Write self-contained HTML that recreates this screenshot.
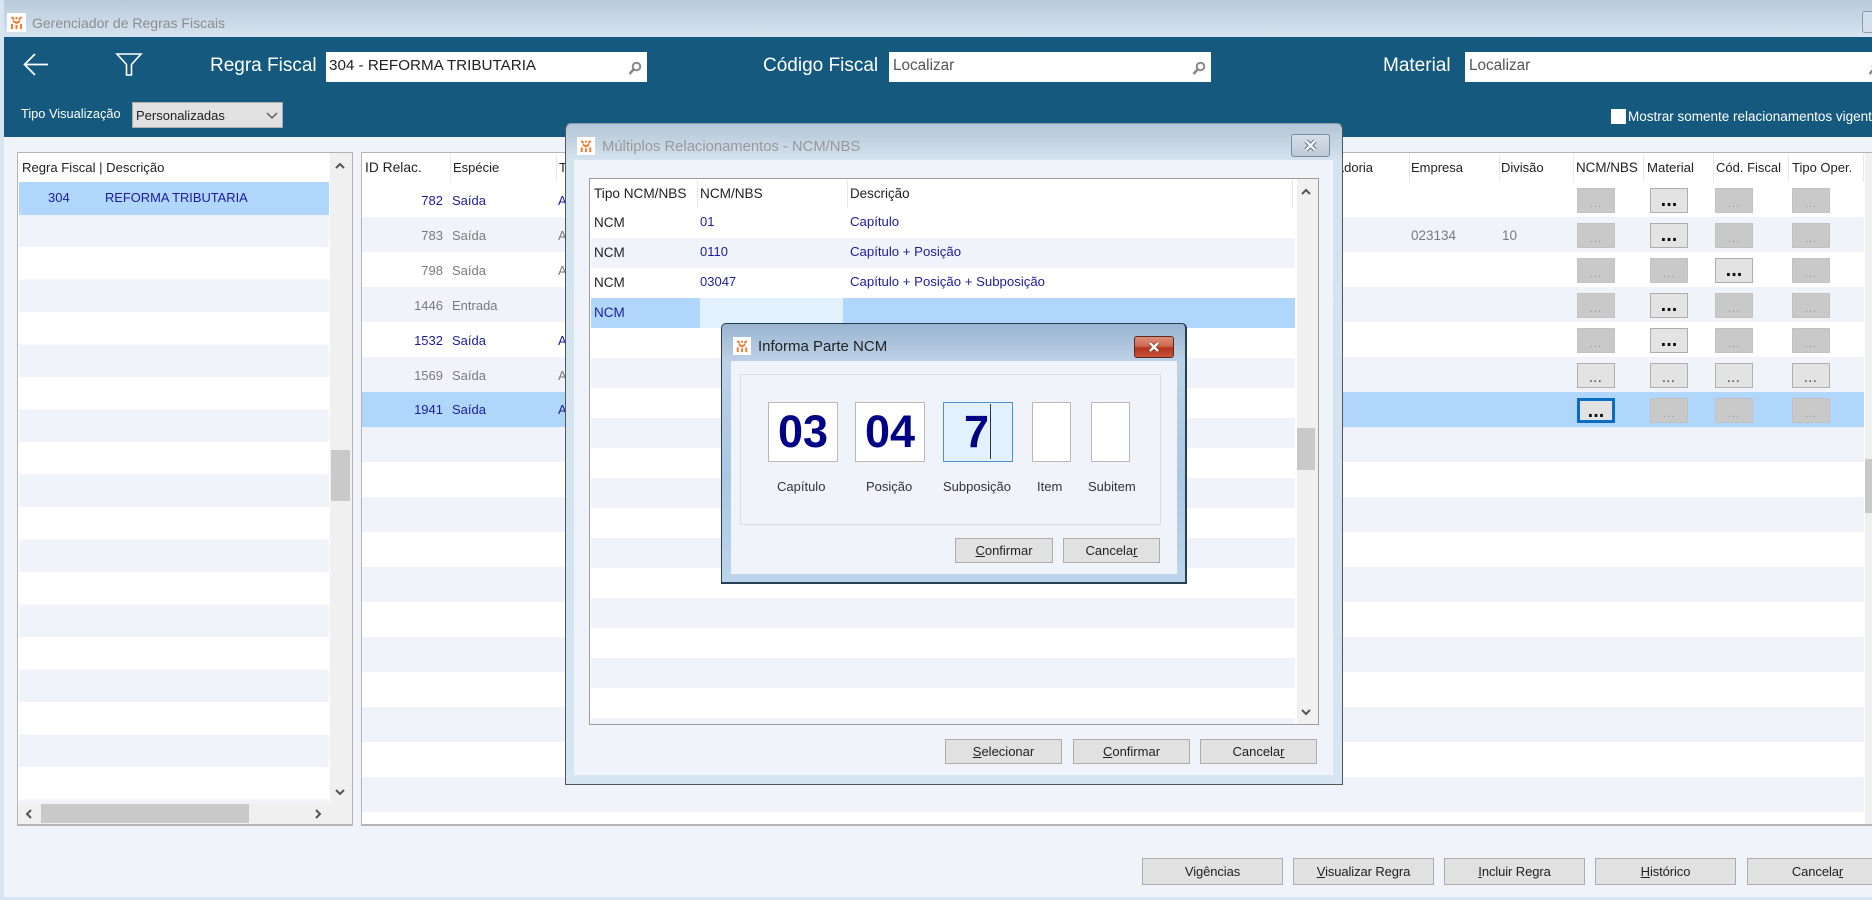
<!DOCTYPE html>
<html><head><meta charset="utf-8"><title>Gerenciador de Regras Fiscais</title>
<style>
html,body{margin:0;padding:0;width:1872px;height:900px;overflow:hidden;background:#f1f3fb;font-family:"Liberation Sans",sans-serif;font-size:13px;color:#222}
#w{position:absolute;left:0;top:0;width:1872px;height:900px;overflow:hidden;filter:blur(.35px)}
div,span{box-sizing:border-box}
.a{position:absolute}
.t{position:absolute;white-space:nowrap;line-height:16px;height:16px}
.bl{color:#1c1c9c}.gr{color:#7b7b7b}
.r{text-align:right}
.sep{position:absolute;width:1px;background:#e8e8e8}
.btn{position:absolute;background:#e1e1e1;border:1px solid #adadad;text-align:center;color:#222;font-size:13px;white-space:nowrap}
.b{position:absolute;width:38px;height:25px;text-align:center;white-space:nowrap;overflow:hidden}
.e{background:#e3e3e3;border:1px solid #adadad;font-weight:bold;font-size:20px;line-height:23px;color:#111}
.d{background:#c9c9c9;border:1px solid #c2c2c2;font-size:11px;line-height:31px;color:#999;letter-spacing:1px}
.l{background:#e3e3e3;border:1px solid #b0b0b0;font-size:11px;font-weight:bold;line-height:30px;color:#555;letter-spacing:1.4px}
.f{background:#e3e3e3;border:3px solid #0a6cc4;font-weight:bold;font-size:20px;line-height:20px;color:#111}
.inp{position:absolute;background:#fff;border:1px solid #b9b9b9}
svg{position:absolute;overflow:visible}
</style></head><body><div id="w">

<!-- window chrome -->
<div class="a" style="left:0;top:0;width:1872px;height:37px;background:linear-gradient(#b9cad9,#d6e4f1)"></div>
<div class="a" style="left:0;top:0;width:4px;height:900px;background:#d7e5f2"></div>
<div class="a" style="left:0;top:897px;width:1872px;height:3px;background:#d7e5f2"></div>
<svg style="left:7px;top:13px" width="19" height="19" viewBox="0 0 19 19"><rect width="19" height="19" fill="#fff"/><path d="M4.5 4l2.5 2.5M14.5 4L12 6.5M9.5 4v2M6 8l3.5 2 3.5-2M5 11v5M9.5 12v4M14 11v5" fill="none" stroke="#f07a2a" stroke-width="2"/></svg>
<div class="t" style="left:32px;top:15px;font-size:14px;color:#8d8d8d">Gerenciador de Regras Fiscais</div>
<div class="a" style="left:1862px;top:11px;width:20px;height:22px;border:1px solid #8a9aa8;border-radius:3px;background:#d3e0ec"></div>

<!-- blue band -->
<div class="a" style="left:4px;top:37px;width:1868px;height:100px;background:#155a7e"></div>
<svg style="left:23px;top:53px" width="26" height="24" viewBox="0 0 26 24" fill="none" stroke="#fff" stroke-width="1.7"><path d="M25 11.5H1.5M12 1L1.5 11.5 12 22"/></svg>
<svg style="left:116px;top:53px" width="26" height="23" viewBox="0 0 26 23" fill="none" stroke="#fff" stroke-width="1.6"><path d="M1 1H25L15.5 11.5V22H10.5V11.5Z"/></svg>
<div class="t" style="left:210px;top:56px;font-size:19px;height:20px;line-height:20px;color:#fff">Regra Fiscal</div>
<div class="a" style="left:326px;top:52px;width:321px;height:30px;background:#fff"></div>
<div class="t" style="left:329px;top:58px;font-size:15.2px;color:#222">304 - REFORMA TRIBUTARIA</div>
<svg style="left:628px;top:61px" width="14" height="14" viewBox="0 0 14 14" fill="none" stroke="#888" stroke-width="2"><circle cx="8.5" cy="5.5" r="3.8"/><path d="M5.5 8.5L1.5 13" stroke-width="2.6"/></svg>
<div class="t" style="left:763px;top:56px;font-size:19px;height:20px;line-height:20px;color:#fff">Código Fiscal</div>
<div class="a" style="left:889px;top:52px;width:322px;height:30px;background:#fff"></div>
<div class="t" style="left:893px;top:58px;font-size:15.3px;color:#555">Localizar</div>
<svg style="left:1192px;top:61px" width="14" height="14" viewBox="0 0 14 14" fill="none" stroke="#888" stroke-width="2"><circle cx="8.5" cy="5.5" r="3.8"/><path d="M5.5 8.5L1.5 13" stroke-width="2.6"/></svg>
<div class="t" style="left:1383px;top:56px;font-size:19px;height:20px;line-height:20px;color:#fff">Material</div>
<div class="a" style="left:1465px;top:52px;width:407px;height:30px;background:#fff"></div>
<div class="t" style="left:1469px;top:58px;font-size:15.3px;color:#555">Localizar</div>
<svg style="left:1868px;top:61px" width="14" height="14" viewBox="0 0 14 14" fill="none" stroke="#888" stroke-width="2"><circle cx="8.5" cy="5.5" r="3.8"/><path d="M5.5 8.5L1.5 13" stroke-width="2.6"/></svg>

<div class="t" style="left:21px;top:106px;font-size:12.8px;color:#fff">Tipo Visualização</div>
<div class="a" style="left:132px;top:102px;width:151px;height:26px;background:#e1e1e1;border:1px solid #adadad"></div>
<div class="t" style="left:136px;top:108px;font-size:13px;color:#222">Personalizadas</div>
<svg style="left:266px;top:112px" width="12" height="7" viewBox="0 0 12 7" fill="none" stroke="#555" stroke-width="1.3"><path d="M1 1L6 6 11 1"/></svg>
<div class="a" style="left:1611px;top:109px;width:15px;height:15px;background:#fff"></div>
<div class="t" style="left:1628px;top:109px;font-size:13.5px;color:#fff">Mostrar somente relacionamentos vigentes</div>

<!-- left panel -->
<div class="a" style="left:17px;top:152px;width:336px;height:674px;background:#fff;border:1px solid #b4b4b4;border-bottom:2px solid #b4b4b4"></div>
<div class="a" style="left:19px;top:182px;width:310px;height:621px;background:repeating-linear-gradient(#fff 0,#fff 32.5px,#f1f3fb 32.5px,#f1f3fb 65px)"></div>
<div class="a" style="left:19px;top:182px;width:310px;height:32.5px;background:#b0d6fc"></div>
<div class="a" style="left:330px;top:153px;width:22px;height:671px;background:#f0f0f0"></div>
<div class="a" style="left:18px;top:803px;width:334px;height:21px;background:#f0f0f0"></div>
<div class="a" style="left:41px;top:804px;width:208px;height:19px;background:#c9c9c9"></div>
<div class="a" style="left:331px;top:450px;width:19px;height:51px;background:#c9c9c9"></div>
<svg style="left:335px;top:162px" width="10" height="7" viewBox="0 0 10 7" fill="none" stroke="#555" stroke-width="2"><path d="M1 6L5 2 9 6"/></svg>
<svg style="left:335px;top:789px" width="10" height="7" viewBox="0 0 10 7" fill="none" stroke="#555" stroke-width="2"><path d="M1 1L5 5 9 1"/></svg>
<svg style="left:25px;top:809px" width="7" height="10" viewBox="0 0 7 10" fill="none" stroke="#555" stroke-width="2"><path d="M6 1L2 5 6 9"/></svg>
<svg style="left:315px;top:809px" width="7" height="10" viewBox="0 0 7 10" fill="none" stroke="#555" stroke-width="2"><path d="M1 1L5 5 1 9"/></svg>
<div class="t" style="left:22px;top:160px;font-size:13.1px">Regra Fiscal | Descrição</div>
<div class="t bl" style="left:48px;top:190px">304</div>
<div class="t bl" style="left:105px;top:190px;font-size:12.9px">REFORMA TRIBUTARIA</div>

<!-- right panel -->
<div class="a" style="left:361px;top:152px;width:1511px;height:674px;background:#fff;border:1px solid #b4b4b4;border-bottom:2px solid #b4b4b4;border-right:0"></div>
<div class="a" style="left:362px;top:182px;width:1502px;height:642px;background:repeating-linear-gradient(#fff 0,#fff 35px,#f1f3fb 35px,#f1f3fb 70px)"></div>
<div class="a" style="left:362px;top:392px;width:1502px;height:35px;background:#b0d6fc"></div>
<div class="a" style="left:1865px;top:153px;width:7px;height:671px;background:#f0f0f0"></div>
<div class="a" style="left:1865px;top:459px;width:7px;height:54px;background:#c9c9c9"></div>
<div class="sep" style="left:450px;top:154px;height:28px"></div>
<div class="sep" style="left:556px;top:154px;height:28px"></div>
<div class="sep" style="left:1409px;top:154px;height:28px"></div>
<div class="sep" style="left:1499px;top:154px;height:28px"></div>
<div class="sep" style="left:1573px;top:154px;height:28px"></div>
<div class="sep" style="left:1643px;top:154px;height:28px"></div>
<div class="sep" style="left:1713px;top:154px;height:28px"></div>
<div class="sep" style="left:1788px;top:154px;height:28px"></div>
<div class="sep" style="left:1863px;top:154px;height:28px"></div>
<div class="t" style="left:365px;top:160px;font-size:13.8px">ID Relac.</div>
<div class="t" style="left:453px;top:160px">Espécie</div>
<div class="t" style="left:559px;top:160px">T</div>
<div class="t" style="left:1308px;top:160px">Mercadoria</div>
<div class="t" style="left:1411px;top:160px">Empresa</div>
<div class="t" style="left:1501px;top:160px">Divisão</div>
<div class="t" style="left:1576px;top:160px;font-size:13.4px">NCM/NBS</div>
<div class="t" style="left:1647px;top:160px;font-size:13.2px">Material</div>
<div class="t" style="left:1716px;top:160px">Cód. Fiscal</div>
<div class="t" style="left:1792px;top:160px">Tipo Oper.</div>

<div class="t r bl" style="left:400px;width:43px;top:193px">782</div><div class="t bl" style="left:452px;top:193px">Saída</div><div class="t bl" style="left:558px;top:193px">A</div>
<div class="t r gr" style="left:400px;width:43px;top:228px">783</div><div class="t gr" style="left:452px;top:228px">Saída</div><div class="t gr" style="left:558px;top:228px">A</div>
<div class="t r gr" style="left:400px;width:43px;top:263px">798</div><div class="t gr" style="left:452px;top:263px">Saída</div><div class="t gr" style="left:558px;top:263px">A</div>
<div class="t r gr" style="left:400px;width:43px;top:298px">1446</div><div class="t gr" style="left:452px;top:298px">Entrada</div>
<div class="t r bl" style="left:400px;width:43px;top:333px">1532</div><div class="t bl" style="left:452px;top:333px">Saída</div><div class="t bl" style="left:558px;top:333px">A</div>
<div class="t r gr" style="left:400px;width:43px;top:368px">1569</div><div class="t gr" style="left:452px;top:368px">Saída</div><div class="t gr" style="left:558px;top:368px">A</div>
<div class="t r bl" style="left:400px;width:43px;top:402px">1941</div><div class="t bl" style="left:452px;top:402px">Saída</div><div class="t bl" style="left:558px;top:402px">A</div>
<div class="t gr" style="left:1411px;top:228px;font-size:13.5px">023134</div><div class="t gr" style="left:1502px;top:228px;font-size:13.5px">10</div>

<div class="b d" style="left:1577px;top:188px">...</div><div class="b e" style="left:1650px;top:188px">...</div><div class="b d" style="left:1715px;top:188px">...</div><div class="b d" style="left:1792px;top:188px">...</div>
<div class="b d" style="left:1577px;top:223px">...</div><div class="b e" style="left:1650px;top:223px">...</div><div class="b d" style="left:1715px;top:223px">...</div><div class="b d" style="left:1792px;top:223px">...</div>
<div class="b d" style="left:1577px;top:258px">...</div><div class="b d" style="left:1650px;top:258px">...</div><div class="b e" style="left:1715px;top:258px">...</div><div class="b d" style="left:1792px;top:258px">...</div>
<div class="b d" style="left:1577px;top:293px">...</div><div class="b e" style="left:1650px;top:293px">...</div><div class="b d" style="left:1715px;top:293px">...</div><div class="b d" style="left:1792px;top:293px">...</div>
<div class="b d" style="left:1577px;top:328px">...</div><div class="b e" style="left:1650px;top:328px">...</div><div class="b d" style="left:1715px;top:328px">...</div><div class="b d" style="left:1792px;top:328px">...</div>
<div class="b l" style="left:1577px;top:363px">...</div><div class="b l" style="left:1650px;top:363px">...</div><div class="b l" style="left:1715px;top:363px">...</div><div class="b l" style="left:1792px;top:363px">...</div>
<div class="b f" style="left:1577px;top:398px">...</div><div class="b d" style="left:1650px;top:398px">...</div><div class="b d" style="left:1715px;top:398px">...</div><div class="b d" style="left:1792px;top:398px">...</div>

<!-- bottom buttons -->
<div class="btn" style="left:1142px;top:858px;width:141px;height:27px;line-height:25px;letter-spacing:-.1px">Vi<u>g</u>ências</div>
<div class="btn" style="left:1293px;top:858px;width:141px;height:27px;line-height:25px;letter-spacing:-.1px"><u>V</u>isualizar Regra</div>
<div class="btn" style="left:1444px;top:858px;width:141px;height:27px;line-height:25px;letter-spacing:-.1px"><u>I</u>ncluir Regra</div>
<div class="btn" style="left:1595px;top:858px;width:141px;height:27px;line-height:25px;letter-spacing:-.1px"><u>H</u>istórico</div>
<div class="btn" style="left:1747px;top:858px;width:141px;height:27px;line-height:25px;letter-spacing:-.1px">Cancela<u>r</u></div>

<!-- dialog 1 -->
<div class="a" style="left:565px;top:123px;width:778px;height:662px;background:linear-gradient(#b3c5d6 0,#d5e3ef 37px,#d7e5f2 100%);border:1px solid #555;border-top-color:#8c9baa;border-radius:6px 6px 0 0"></div>
<div class="a" style="left:574px;top:160px;width:759px;height:615px;background:#f1f3fb"></div>
<svg style="left:577px;top:137px" width="18" height="18" viewBox="0 0 19 19"><rect width="19" height="19" fill="#fff"/><path d="M4.5 4l2.5 2.5M14.5 4L12 6.5M9.5 4v2M6 8l3.5 2 3.5-2M5 11v5M9.5 12v4M14 11v5" fill="none" stroke="#f07a2a" stroke-width="2"/></svg>
<div class="t" style="left:602px;top:139px;font-size:14.8px;color:#999">Múltiplos Relacionamentos - NCM/NBS</div>
<div class="a" style="left:1291px;top:134px;width:39px;height:23px;background:linear-gradient(#d5dfe9,#bdcad7);border:1px solid #7d8c9b;border-radius:3px"></div>
<svg style="left:1304px;top:139px" width="13" height="13" viewBox="0 0 13 13"><path d="M2 2L11 11M11 2L2 11" stroke="#5f6d7a" stroke-width="4.4"/><path d="M2 2L11 11M11 2L2 11" stroke="#f4f7fa" stroke-width="2.4"/></svg>

<div class="a" style="left:589px;top:178px;width:730px;height:547px;background:#fff;border:1px solid #9c9c9c"></div>
<div class="a" style="left:591px;top:208px;width:704px;height:516px;background:repeating-linear-gradient(#fff 0,#fff 30px,#f1f3fb 30px,#f1f3fb 60px)"></div>
<div class="a" style="left:591px;top:298px;width:704px;height:30px;background:#b0d6fc"></div>
<div class="a" style="left:700px;top:298px;width:143px;height:30px;background:#e3f0fd"></div>
<div class="a" style="left:1297px;top:179px;width:21px;height:545px;background:#f0f0f0"></div>
<div class="a" style="left:1297px;top:428px;width:18px;height:42px;background:#c9c9c9"></div>
<svg style="left:1301px;top:188px" width="10" height="7" viewBox="0 0 10 7" fill="none" stroke="#555" stroke-width="2"><path d="M1 6L5 2 9 6"/></svg>
<svg style="left:1301px;top:709px" width="10" height="7" viewBox="0 0 10 7" fill="none" stroke="#555" stroke-width="2"><path d="M1 1L5 5 9 1"/></svg>
<div class="sep" style="left:697px;top:180px;height:28px"></div>
<div class="sep" style="left:847px;top:180px;height:28px"></div>
<div class="sep" style="left:1292px;top:180px;height:28px"></div>
<div class="t" style="left:594px;top:186px;font-size:13.6px">Tipo NCM/NBS</div>
<div class="t" style="left:700px;top:186px;font-size:13.6px">NCM/NBS</div>
<div class="t" style="left:850px;top:186px;font-size:13.4px">Descrição</div>
<div class="t" style="left:594px;top:215px;font-size:13.5px">NCM</div>
<div class="t" style="left:594px;top:245px;font-size:13.5px">NCM</div>
<div class="t" style="left:594px;top:275px;font-size:13.5px">NCM</div>
<div class="t bl" style="left:594px;top:305px;font-size:13.5px">NCM</div>
<div class="t bl" style="left:700px;top:214px">01</div><div class="t bl" style="left:850px;top:214px;font-size:13.2px">Capítulo</div>
<div class="t bl" style="left:700px;top:244px">0110</div><div class="t bl" style="left:850px;top:244px;font-size:13.2px">Capítulo + Posição</div>
<div class="t bl" style="left:700px;top:274px">03047</div><div class="t bl" style="left:850px;top:274px;font-size:13.2px">Capítulo + Posição + Subposição</div>

<div class="btn" style="left:945px;top:739px;width:117px;height:25px;line-height:23px"><u>S</u>elecionar</div>
<div class="btn" style="left:1073px;top:739px;width:117px;height:25px;line-height:23px"><u>C</u>onfirmar</div>
<div class="btn" style="left:1200px;top:739px;width:117px;height:25px;line-height:23px">Cancela<u>r</u></div>

<!-- dialog 2 -->
<div class="a" style="left:721px;top:323px;width:466px;height:261px;background:linear-gradient(#9ab4d0 0,#bdd2e7 38px,#aac7e4 150px,#bcd5ec 100%);border:1px solid #26404f;border-width:1px 2px 2px 1px;border-radius:5px 5px 0 0"></div>
<div class="a" style="left:731px;top:361px;width:446px;height:213px;background:#f1f3fb"></div>
<svg style="left:733px;top:337px" width="18" height="18" viewBox="0 0 19 19"><rect width="19" height="19" fill="#fff"/><path d="M4.5 4l2.5 2.5M14.5 4L12 6.5M9.5 4v2M6 8l3.5 2 3.5-2M5 11v5M9.5 12v4M14 11v5" fill="none" stroke="#f07a2a" stroke-width="2"/></svg>
<div class="t" style="left:758px;top:339px;font-size:15px;color:#222">Informa Parte NCM</div>
<div class="a" style="left:1134px;top:336px;width:40px;height:22px;background:linear-gradient(#dd8e7c 0,#cf6a52 45%,#b3341c 55%,#c9533a 100%);border:1px solid #5c2a22;border-radius:3px"></div>
<svg style="left:1148px;top:341px" width="12" height="12" viewBox="0 0 12 12"><path d="M2 2L10 10M10 2L2 10" stroke="#8a3020" stroke-width="4"/><path d="M2 2L10 10M10 2L2 10" stroke="#fff" stroke-width="2.4"/></svg>
<div class="a" style="left:740px;top:374px;width:421px;height:151px;border:1px solid #dcdcdc"></div>

<div class="inp" style="left:768px;top:402px;width:70px;height:60px"></div>
<div class="inp" style="left:855px;top:402px;width:70px;height:60px"></div>
<div class="inp" style="left:943px;top:402px;width:70px;height:60px;background:#e3f0fd;border-color:#4a90d6"></div>
<div class="inp" style="left:1032px;top:402px;width:39px;height:60px"></div>
<div class="inp" style="left:1091px;top:402px;width:39px;height:60px"></div>
<div class="t" style="left:768px;width:70px;top:406px;height:52px;line-height:52px;font-size:45px;font-weight:bold;color:#000087;text-align:center">03</div>
<div class="t" style="left:855px;width:70px;top:406px;height:52px;line-height:52px;font-size:45px;font-weight:bold;color:#000087;text-align:center">04</div>
<div class="t" style="left:964px;top:406px;height:52px;line-height:52px;font-size:45px;font-weight:bold;color:#000087">7</div>
<div class="a" style="left:990px;top:404px;width:1px;height:55px;background:#333"></div>
<div class="t" style="left:777px;top:479px;color:#333">Capítulo</div>
<div class="t" style="left:866px;top:479px;color:#333">Posição</div>
<div class="t" style="left:943px;top:479px;color:#333">Subposição</div>
<div class="t" style="left:1037px;top:479px;color:#333">Item</div>
<div class="t" style="left:1088px;top:479px;color:#333">Subitem</div>
<div class="btn" style="left:955px;top:538px;width:98px;height:25px;line-height:23px"><u>C</u>onfirmar</div>
<div class="btn" style="left:1063px;top:538px;width:97px;height:25px;line-height:23px">Cancela<u>r</u></div>

</div></body></html>
